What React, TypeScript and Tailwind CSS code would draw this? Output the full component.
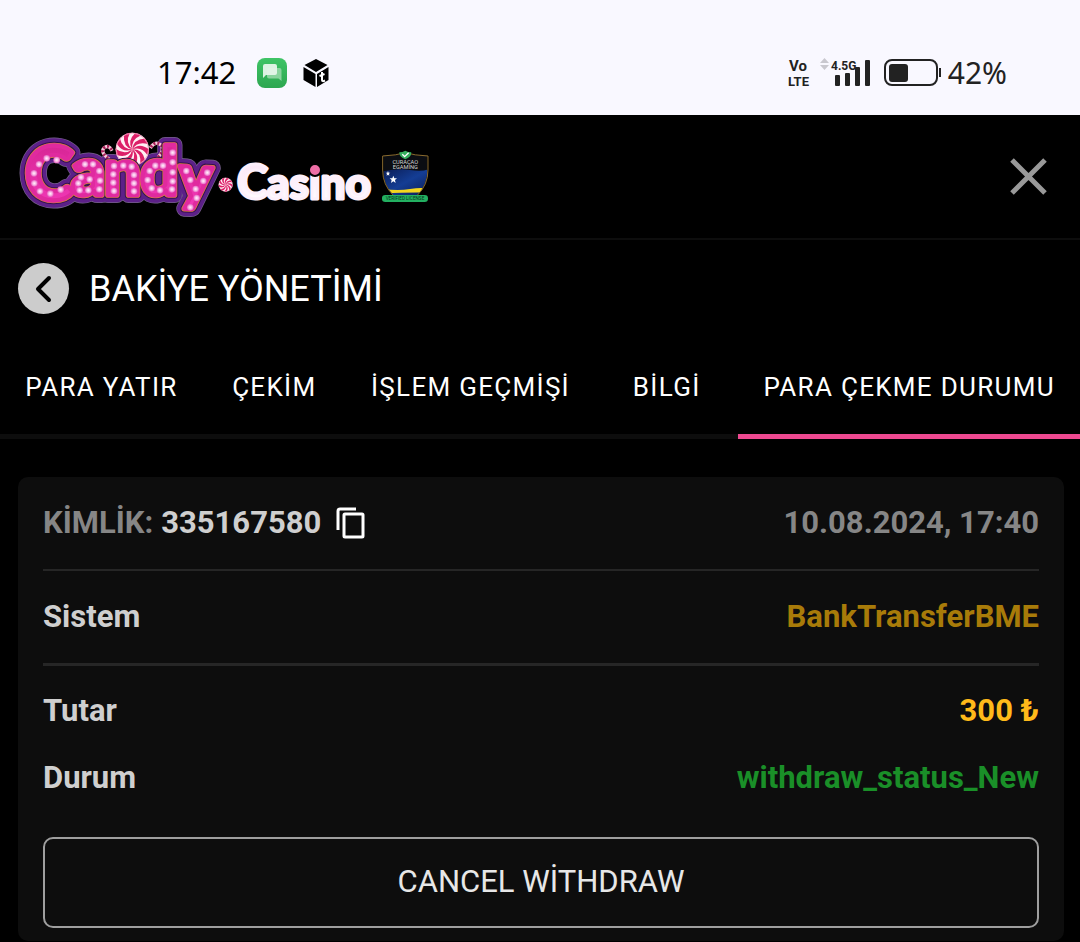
import { useState } from 'react'

const tabs = ['PARA YATIR', 'ÇEKİM', 'İŞLEM GEÇMİŞİ', 'BİLGİ', 'PARA ÇEKME DURUMU']

const letters = [
  { char: 'C', x: 45, y: 241, size: 222, tilt: 0 },
  { char: 'a', x: 184, y: 226, size: 198, tilt: 0 },
  { char: 'n', x: 283, y: 226, size: 194, tilt: 0 },
  { char: 'd', x: 391, y: 226, size: 200, tilt: 0 },
  { char: 'y', x: 504, y: 234, size: 186, tilt: 3 },
]

const bulbs = [
  [140, 120], [110, 115], [87, 133], [72, 160], [73, 190], [90, 214], [121, 221], [152, 209],
  [225, 133], [249, 133], [268, 153], [270, 182], [268, 208], [239, 178], [213, 172], [205, 190], [209, 211], [235, 211],
  [312, 138], [310, 163], [310, 188], [312, 213], [340, 137], [365, 140], [372, 165], [372, 190], [372, 214],
  [488, 98], [488, 127], [488, 157], [488, 184], [486, 208], [459, 137], [436, 137], [419, 153], [413, 180], [425, 205], [450, 211],
  [529, 153], [541, 180], [557, 207], [592, 158], [580, 183], [560, 234], [541, 262],
]

const swirl = Array.from({ length: 9 }, (_, i) => i * 40)

function Peppermint({ x, y, r }: { x: number; y: number; r: number }) {
  return (
    <g transform={`translate(${x} ${y}) scale(${r / 100})`}>
      <circle r="100" fill="#fff0f4" />
      {swirl.map(angle => (
        <path
          key={angle}
          d="M0 0Q42 -42 100 0A100 100 0 0 1 93 37Q56 -20 0 0Z"
          fill="#dc1f68"
          transform={`rotate(${angle})`}
        />
      ))}
      <circle r="97" fill="none" stroke="#f3a3c2" strokeWidth="5" />
    </g>
  )
}

function Candy(props: React.SVGProps<SVGGElement>) {
  return (
    <g strokeLinejoin="round" {...props}>
      {letters.map(({ char, x, y, size, tilt }) => (
        <text key={char} x={x} y={y} fontSize={size} transform={`rotate(${tilt} ${x} ${y})`}>
          {char}
        </text>
      ))}
    </g>
  )
}

function Cane({ d }: { d: string }) {
  return (
    <g fill="none" strokeWidth="10">
      <path d={d} stroke="#f5c9d9" />
      <path d={d} stroke="#a81f58" strokeDasharray="6 6" />
    </g>
  )
}

function Logo() {
  return (
    <svg viewBox="0 0 440 123" className="w-[440px] h-[123px] shrink-0" role="img" aria-label="Candy Casino">
      <defs>
        <linearGradient id="pink" x1="0" y1="0" x2="0" y2="1">
          <stop offset="0" stopColor="#d0208c" />
          <stop offset="1" stopColor="#f53cbc" />
        </linearGradient>
        <linearGradient id="white" x1="0" y1="0" x2="0" y2="1">
          <stop offset="0" stopColor="#fbe3f6" />
          <stop offset="1" stopColor="#ffffff" />
        </linearGradient>
        <radialGradient id="bulb">
          <stop offset="0" stopColor="#fff4fc" />
          <stop offset="0.5" stopColor="#f9b8e6" />
          <stop offset="1" stopColor="#e560bf" />
        </radialGradient>
        <linearGradient id="flag" x1="0" y1="0" x2="1" y2="1">
          <stop offset="0" stopColor="#0a1a50" />
          <stop offset="0.5" stopColor="#143d94" />
          <stop offset="1" stopColor="#0a1a50" />
        </linearGradient>
        <clipPath id="shield">
          <path d="M520 106Q560 108 586 98Q612 108 652 106V150Q652 195 622 225H550Q520 195 520 150Z" />
        </clipPath>
      </defs>

      <g transform="translate(10 5) scale(.3333)" className="font-['Lato',sans-serif] font-black">
        <Candy fill="#75618a" stroke="#75618a" strokeWidth="48" />
        <Candy fill="#5c2088" stroke="#5c2088" strokeWidth="44" />
        <Cane d="M304 122Q268 98 282 84Q296 72 306 92" />
        <Cane d="M444 112Q464 92 454 76Q436 60 421 84" />
        <Peppermint x={367} y={88} r={50} />
        <Candy fill="#34104f" stroke="#34104f" strokeWidth="23" />
        <Candy fill="#d9803f" stroke="#d9803f" strokeWidth="17" />
        <Candy fill="url(#pink)" stroke="#e02a9f" strokeWidth="13" />
        {bulbs.map(([x, y]) => (
          <circle key={`${x}-${y}`} cx={x} cy={y} r="10" fill="url(#bulb)" />
        ))}
        <Peppermint x={647} y={194} r={21} />
      </g>

      <g className="font-['Lato',sans-serif] font-black" fill="url(#white)" stroke="#fdf0fb" strokeWidth="3" strokeLinejoin="round">
        <text x="237" y="84" fontSize="47">C</text>
        <text x="267" y="84" fontSize="44">asino</text>
      </g>
      <circle cx="315" cy="55" r="6" fill="#ee6ea6" stroke="#000" strokeWidth="2" />

      <g transform="translate(210 5) scale(.3333)">
        <g clipPath="url(#shield)">
          <path d="M510 90H660V240H510Z" fill="#0b0d12" />
          <path d="M510 156Q560 144 600 150T660 146V230H510Z" fill="url(#flag)" />
          <path d="M510 205Q560 214 600 207T660 208V218Q600 216 510 221Z" fill="#f2d51f" />
        </g>
        <path
          d="M518 108Q560 106 586 98Q612 106 654 108V150Q654 195 622 226M550 226Q518 195 518 150V108"
          fill="none"
          stroke="#8b6b2e"
          strokeWidth="3"
        />
        <path d="M550 167l3 8h8l-6 5 2 9-7-5-7 5 2-9-6-5h8Z" fill="#fff" />
        <path d="M534 153l2 5h5l-4 3 1 6-4-3-4 3 1-6-4-3h5Z" fill="#fff" />
        <path d="M568 97Q578 97 586 92Q594 97 604 97Q604 112 586 118Q568 112 568 97Z" fill="#35ad5c" />
        <path d="M577 103l7 7 12-12" fill="none" stroke="#fff" strokeWidth="4" />
        <rect x="516" y="225" width="138" height="21" rx="10" fill="#23b061" />
        <g className="font-['Roboto',sans-serif]" textAnchor="middle">
          <text x="586" y="131" fontSize="17" fill="#d5d5d5">CURAÇAO</text>
          <text x="586" y="147" fontSize="17" fill="#d5d5d5">EGAMING</text>
          <text x="585" y="241" fontSize="14" fill="#06331a">VERIFIED LICENSE</text>
        </g>
      </g>
    </svg>
  )
}

function StatusBar() {
  return (
    <div className="flex items-center justify-between h-[115px] pt-[30px] pl-[157px] pr-[73px] bg-[#f9f8ff] font-['Noto_Sans',sans-serif] text-black">
      <div className="flex items-center">
        <span className="text-[31px] leading-none">17:42</span>
        <svg viewBox="0 0 30 30" className="w-[30px] h-[30px] ml-[21px]">
          <defs>
            <linearGradient id="chat" x1="0" y1="0" x2="0" y2="1">
              <stop offset="0" stopColor="#3fc466" />
              <stop offset="1" stopColor="#2da650" />
            </linearGradient>
          </defs>
          <rect width="30" height="30" rx="8" fill="url(#chat)" />
          <path d="M12 10h10.500q2 0 2 2v11l-3-2.500H12q-2 0-2-2V12q0-2 2-2Z" fill="#8ad49e" />
          <path d="M8 6h10q2 0 2 2v7q0 2-2 2H9l-3 3V8q0-2 2-2Z" fill="#e6f6ea" fillOpacity=".95" />
        </svg>
        <svg viewBox="0 0 26 28" className="w-[26px] h-7 ml-4">
          <path d="M13 0l11.500 6L13 13 1.500 6ZM.500 8L12.500 15v13L.500 21ZM25.500 8L14 15v13l11.500-7Z" />
          <path d="M19 13v8q0 2 3 .5M16.500 17l5-2" fill="none" stroke="#fff" strokeWidth="2" />
        </svg>
      </div>
      <div className="flex items-center text-[#222]">
        <svg viewBox="0 0 84 30" className="w-[84px] h-[30px] overflow-visible" fill="#222">
          <g className="font-['Roboto',sans-serif] font-bold">
            <text x="1" y="13" fontSize="15">Vo</text>
            <text x="0" y="28" fontSize="13">LTE</text>
            <text x="43" y="12" fontSize="12">4.5G</text>
          </g>
          <path d="M36.500 0l4.500 5h-9ZM36.500 12l4.500-5h-9Z" fill="#c9c8cf" />
          <rect x="47" y="17" width="5" height="11" rx="1" />
          <rect x="57" y="15" width="5" height="13" rx="1" />
          <rect x="67" y="9" width="5" height="19" rx="1" />
          <rect x="77" y="2" width="5" height="26" rx="1" />
        </svg>
        <svg viewBox="0 0 58 28" className="w-[58px] h-7 ml-3">
          <rect x="1" y="1" width="52" height="25" rx="7" fill="none" stroke="#222" strokeWidth="2" />
          <rect x="5" y="5" width="19" height="18" rx="3" fill="#222" />
          <path d="M56 9v9" stroke="#222" strokeWidth="2" />
        </svg>
        <span className="ml-[6px] text-[30px] leading-none">42%</span>
      </div>
    </div>
  )
}

export default function App() {
  const [active, setActive] = useState(4)

  return (
    <div className="min-h-screen bg-black text-white font-['Roboto',sans-serif]">
      <StatusBar />
      <header className="flex items-center justify-between pr-8 border-b-2 border-[#0d0d0d]">
        <Logo />
        <button aria-label="Kapat">
          <svg viewBox="0 0 40 40" className="w-10 h-10">
            <path d="M4 3l33 33M37 3L4 36" stroke="#999" strokeWidth="5" />
          </svg>
        </button>
      </header>

      <main>
        <div className="flex items-center gap-5 pt-[23px] px-[18px]">
          <button aria-label="Geri" className="flex items-center justify-center w-[51px] h-[51px] pr-[2px] rounded-full bg-[#ccc]">
            <svg viewBox="0 0 18 28" className="w-[18px] h-7">
              <path d="M15 3L4 14l11 11" fill="none" stroke="#000" strokeWidth="4" strokeLinecap="round" strokeLinejoin="round" />
            </svg>
          </button>
          <h1 className="text-[36px] leading-none">BAKİYE YÖNETİMİ</h1>
        </div>

        <nav className="flex mt-[25px] overflow-hidden">
          {tabs.map((tab, i) => (
            <button
              key={tab}
              onClick={() => setActive(i)}
              className={`grow h-[100px] min-w-[143px] pt-[2px] px-[25px] border-b-[5px] text-[26px] tracking-wider whitespace-nowrap ${
                i === active ? 'border-[#ee4990]' : 'border-[#0d0d0d]'
              }`}
            >
              {tab}
            </button>
          ))}
        </nav>

        <section className="mt-[38px] ml-[18px] mr-4 px-[25px] pb-[13px] rounded-[10px] bg-[#0d0d0d] text-[31px] font-bold text-[#cfcfcf]">
          <div className="flex items-center justify-between h-[94px] border-b-2 border-[#262626]">
            <div className="flex items-center">
              <span className="text-[#868686]">KİMLİK:</span>
              <span className="ml-2">335167580</span>
              <button aria-label="Kopyala" className="ml-[15px]">
                <svg viewBox="0 0 30 32" className="w-[30px] h-8" fill="none" stroke="#fff" strokeWidth="3">
                  <path d="M2 23V4q0-2 2-2h16" />
                  <rect x="8" y="7" width="19" height="23" rx="1" />
                </svg>
              </button>
            </div>
            <span className="text-[#868686]">10.08.2024, 17:40</span>
          </div>
          <div className="flex items-center justify-between h-[95px] border-b-3 border-[#262626]">
            <span>Sistem</span>
            <span className="text-[#a87b09]">BankTransferBME</span>
          </div>
          <div className="flex items-center justify-between h-[67px] mt-3">
            <span>Tutar</span>
            <span className="text-[#ffba1a]">300 ₺</span>
          </div>
          <div className="flex items-center justify-between h-[67px]">
            <span>Durum</span>
            <span className="text-[#1a8f28]">withdraw_status_New</span>
          </div>
          <button className="w-full h-[91px] mt-[25px] border-2 border-[#9e9e9e] rounded-[10px] font-normal text-[#e7e7e7]">
            CANCEL WİTHDRAW
          </button>
        </section>
      </main>
    </div>
  )
}
